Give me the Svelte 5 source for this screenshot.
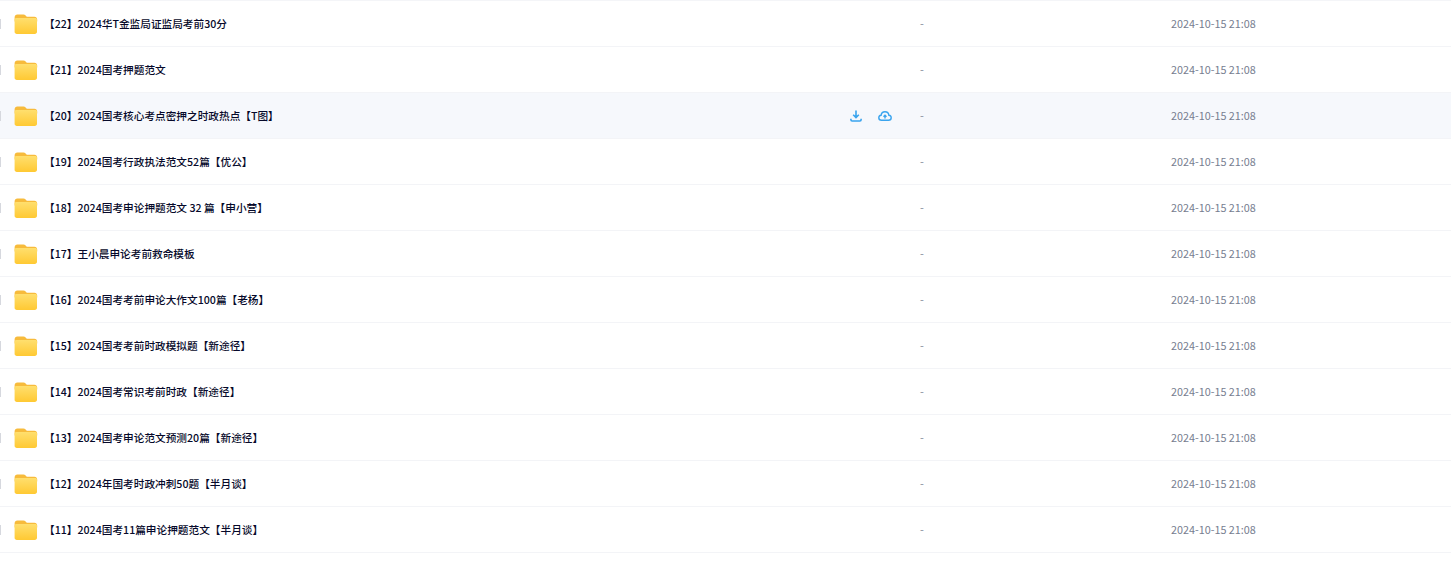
<script lang="ts">
  const rows = [
    '【22】2024华T金监局证监局考前30分',
    '【21】2024国考押题范文',
    '【20】2024国考核心考点密押之时政热点【T图】',
    '【19】2024国考行政执法范文52篇【优公】',
    '【18】2024国考申论押题范文 32 篇【申小营】',
    '【17】王小晨申论考前救命模板',
    '【16】2024国考考前申论大作文100篇【老杨】',
    '【15】2024国考考前时政模拟题【新途径】',
    '【14】2024国考常识考前时政【新途径】',
    '【13】2024国考申论范文预测20篇【新途径】',
    '【12】2024年国考时政冲刺50题【半月谈】',
    '【11】2024国考11篇申论押题范文【半月谈】'
  ];
  const hovered = 2;
</script>

<div class="list">
  {#each rows as name, i}
    <div class="row" class:hover={i === hovered}>
      <span class="check"></span>
      <svg class="folder" viewBox="0 0 24 22" width="24" height="22" aria-hidden="true">
        <path d="M.6 4.500C.6 2.800 1.800 1.600 3.400 1.600h6c1 0 1.600.4 2.200 1l1.200 1.200h7.600c1.600 0 2.800 1.200 2.800 2.800v2H.6z" fill="#f7bb3c" />
        <path d="M.6 6.600c0-1 .8-1.600 1.800-1.600h18.800c1 0 1.800.7 1.800 1.700v12.100c0 1.300-1 2.200-2.200 2.200H2.800C1.600 21 .6 20.100.6 18.800z" fill="url(#fold)" />
        <defs>
          <linearGradient id="fold" x1="0" y1="0" x2="0" y2="1">
            <stop offset="0" stop-color="#ffdf6e" />
            <stop offset="1" stop-color="#ffc933" />
          </linearGradient>
        </defs>
      </svg>
      <span class="name">{name}</span>
      <span class="actions">
        {#if i === hovered}
          <svg viewBox="0 0 14 14" width="14" height="14" fill="none" stroke="#3aa4ee" stroke-width="1.6" aria-hidden="true">
            <path d="M7 1.500v7M4.200 5.800 7 8.600l2.800-2.800M1.900 9.800v1c0 .7.5 1.200 1.200 1.200h7.800c.7 0 1.200-.5 1.200-1.200v-1" />
          </svg>
          <svg viewBox="0 0 16 14" width="16" height="14" fill="none" stroke="#3aa4ee" stroke-width="1.4" aria-hidden="true">
            <path d="M4.500 11.300h7c1.500 0 2.700-1.100 2.700-2.500 0-1.400-1-2.400-2.300-2.500C11.700 4.200 10.100 2.700 8 2.700 5.900 2.700 4.300 4.200 4.100 6.300 2.800 6.500 1.800 7.500 1.800 8.800c0 1.400 1.200 2.500 2.700 2.500z" />
            <path d="M8 9.400V6.200M6.500 7.700 8 6.200l1.500 1.500" />
          </svg>
        {/if}
      </span>
      <span class="size">-</span>
      <span class="date">2024-10-15 21:08</span>
    </div>
  {/each}
</div>

<style>
  :global(body) {
    margin: 0;
    background: #fff;
  }
  .list {
    border-top: 1px solid #f4f5f8;
    font-family: "Noto Sans CJK SC", "Noto Sans", sans-serif;
  }
  .row {
    display: flex;
    align-items: center;
    height: 45px;
    border-bottom: 1px solid #f3f4f7;
  }
  .row.hover {
    background: #f6f8fc;
  }
  .check {
    width: 1px;
    height: 10px;
    margin-right: 13px;
    background: #d6d8de;
  }
  .folder {
    flex: none;
    margin-right: 6px;
  }
  .name {
    width: 800px;
    font-size: 10.67px;
    font-weight: 500;
    line-height: 14px;
    color: #06092a;
    white-space: nowrap;
  }
  .actions {
    display: flex;
    align-items: center;
    gap: 14px;
    width: 76px;
    padding-left: 5px;
    box-sizing: border-box;
  }
  .size {
    width: 251px;
    font-size: 11px;
    line-height: 14px;
    padding-bottom: 2px;
    color: #878c9c;
  }
  .date {
    font-size: 10.8px;
    line-height: 14px;
    padding-bottom: 2px;
    color: #767d90;
  }
</style>
